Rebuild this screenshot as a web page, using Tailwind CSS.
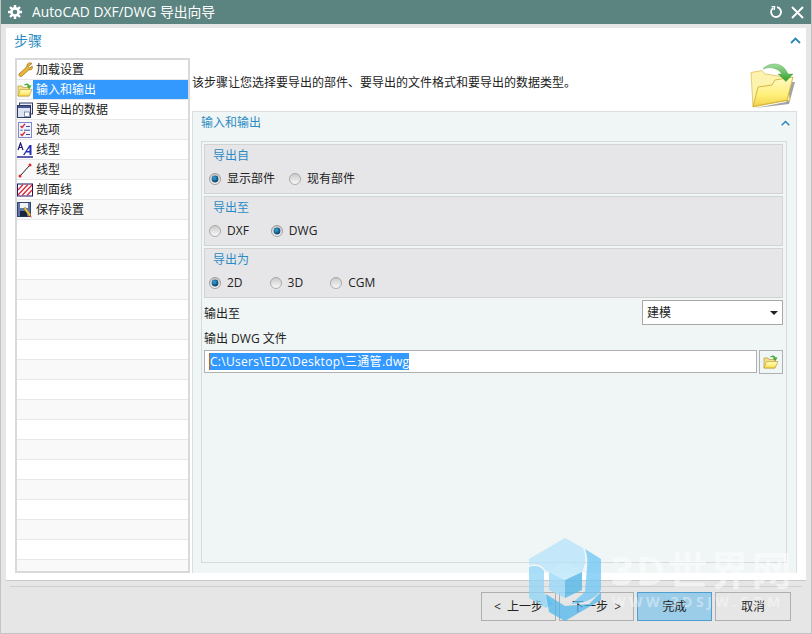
<!DOCTYPE html>
<html lang="zh-CN">
<head>
  <meta charset="UTF-8">
  <title>AutoCAD DXF/DWG 导出向导</title>
  <script src="https://cdn.jsdelivr.net/npm/@tailwindcss/browser@4"></script>
</head>
<body class="w-[812px] h-[634px] overflow-hidden">
  <svg class="absolute w-0 h-0">
    <defs>
      <linearGradient id="fold" x1="0" y1="0" x2="0" y2="1"><stop offset="0" stop-color="#fff8c8"/><stop offset="0.6" stop-color="#fff07a"/><stop offset="1" stop-color="#f2d24e"/></linearGradient>
      <linearGradient id="arrow" x1="0" y1="0" x2="0" y2="1"><stop offset="0" stop-color="#a4dba0"/><stop offset="1" stop-color="#2f9f28"/></linearGradient>
      <radialGradient id="dot" cx="0.4" cy="0.35" r="0.7"><stop offset="0" stop-color="#39a4d8"/><stop offset="1" stop-color="#04395f"/></radialGradient>
      <linearGradient id="ring" x1="0" y1="0" x2="0" y2="1"><stop offset="0" stop-color="#c9c9c9"/><stop offset="1" stop-color="#fafafa"/></linearGradient>
    </defs>
  </svg>

  <div class="relative w-[812px] h-[634px] overflow-hidden bg-[#e6e6e6] border-l border-r border-b border-[#c4c4c4] text-[12px] leading-[16px] text-[#222] [font-family:'Open_Sans','Noto_Sans_CJK_SC',sans-serif]">
    <!-- title bar -->
    <header class="h-[24px] -mx-px bg-[#5b8480] flex items-center pl-[8px] pr-[8px] text-white">
      <svg class="w-[14px] h-[14px]" viewBox="0 0 14 14"><circle cx="7" cy="7" r="3.6" fill="none" stroke="#fff" stroke-width="2.6"/><g stroke="#fff" stroke-width="2.4"><path d="M7 0v3M7 11v3M0 7h3M11 7h3M2 2l2.2 2.2M9.800 9.800L12 12M12 2L9.800 4.200M4.200 9.800L2 12"/></g></svg>
      <span class="ml-[10px] text-[13.800px]">AutoCAD DXF/DWG 导出向导</span>
      <svg class="ml-auto w-[14px] h-[14px]" viewBox="0 0 14 14" fill="none" stroke="#fff" stroke-width="1.800"><path d="M4.200 2.900A5 5 0 1 0 8 2.100"/><path d="M2.600 1.600L5.600 1.600 5.200 4.800" stroke-width="1.400"/></svg>
      <svg class="ml-[8px] w-[13px] h-[13px]" viewBox="0 0 13 13" fill="none" stroke="#fff" stroke-width="2"><path d="M1 1l11 11M12 1L1 12"/></svg>
    </header>

    <!-- white panel -->
    <div class="mt-[4px] ml-[5px] w-[800px] h-[553px] bg-white border-b border-[#c8c8c8] flex flex-col">
      <div class="h-[30px] pl-[8px] pr-[5px] pb-[5px] flex items-center justify-between text-[14px] text-[#2b8cc4]">
        <span>步骤</span>
        <svg class="w-[11px] h-[7px]" viewBox="0 0 11 7" fill="none" stroke="#2b86bd" stroke-width="1.800"><path d="M1 6l4.500-4.500L10 6"/></svg>
      </div>
      <div class="flex pl-[9px] gap-[2px]">
        <!-- step list -->
        <ul class="w-[175px] h-[515px] overflow-hidden border-2 border-[#d9d9d9] text-[#222]">
          <li class="h-[20px] flex items-center border-b border-[#e8e8e8] bg-white">
            <svg class="w-[16px] h-[16px] shrink-0" viewBox="0 0 16 16"><path d="M15 1.500c-2-1.200-5-.6-5 2 0 .9-.3 1.500-1 2.200L2 12a2 2 0 0 0 2.500 2.500l6.500-6c.8-.6 1.400-.8 2.200-.8 1.800 0 2.800-1.700 2-3.500L12.500 6 11 4.500z" fill="#eab53a" stroke="#a2730f" stroke-width="0.800"/></svg>
            <span class="ml-[3px]">加载设置</span>
          </li>
          <li class="h-[20px] flex items-center border-b border-[#e8e8e8] bg-[#f9f9f9]">
            <svg class="w-[16px] h-[16px] shrink-0" viewBox="0 0 16 16"><path d="M1 14V4h4l1 1.500h6V14z" fill="#f5e08a" stroke="#b89a3a" stroke-width="0.700"/><path d="M1 14l2.500-6.500H15L12 14z" fill="url(#fold)" stroke="#c4a437" stroke-width="0.700"/><path d="M7 3.500C8 1.200 11 .8 12.500 3.400L14.500 3.200 12.600 7 9.800 4.200l1.200-.2C10 2.800 8.500 2.700 7 3.500z" fill="#43ad38"/></svg>
            <span class="pl-[3px] flex-1 h-[19px] bg-[#3399ff] text-white flex items-center">输入和输出</span>
          </li>
          <li class="h-[20px] flex items-center border-b border-[#e8e8e8] bg-white">
            <svg class="w-[16px] h-[16px] shrink-0" viewBox="0 0 16 16"><rect x="2.500" y="1" width="13" height="11" fill="#e9ecf5" stroke="#2f3a63"/><rect x="0.500" y="3.500" width="13" height="12" fill="#dfe4f3" stroke="#2f3a63"/><rect x="1" y="4" width="12" height="2" fill="#46568f"/><rect x="7.500" y="10" width="5" height="4.500" fill="#fff" stroke="#5b6797" stroke-width="0.700"/></svg>
            <span class="ml-[3px]">要导出的数据</span>
          </li>
          <li class="h-[20px] flex items-center border-b border-[#e8e8e8] bg-[#f9f9f9]">
            <svg class="w-[16px] h-[16px] shrink-0" viewBox="0 0 16 16"><rect x="1.500" y="0.500" width="13" height="15" fill="#f2f3fb" stroke="#7f86c9"/><path d="M3.500 4l1.500 1.500L8 1.800M3.500 12l1.500 1.500L8 9.800" fill="none" stroke="#d5232a" stroke-width="1.300"/><path d="M9 4.500h4M3.500 8.200h2M7 8.200h6M9 12.500h4" stroke="#3a4a9c"/></svg>
            <span class="ml-[3px]">选项</span>
          </li>
          <li class="h-[20px] flex items-center border-b border-[#e8e8e8] bg-white">
            <svg class="w-[16px] h-[16px] shrink-0" viewBox="0 0 16 16"><path d="M1 8L3.500 1 6 8M2 5.500h3" fill="none" stroke="#1c1c70" stroke-width="1.200"/><path d="M6 13L12.500 3h2v10h-2v-2.500H9L7.700 13zM10 9h2.500V5.500z" fill="#2430b8"/><path d="M0 15h16" stroke="#1c1c90" stroke-width="1.400"/></svg>
            <span class="ml-[3px]">线型</span>
          </li>
          <li class="h-[20px] flex items-center border-b border-[#e8e8e8] bg-[#f9f9f9]">
            <svg class="w-[16px] h-[16px] shrink-0" viewBox="0 0 16 16"><path d="M3 14L13 3" stroke="#222" stroke-width="1"/><circle cx="3" cy="14" r="1.500" fill="#d8232a"/><circle cx="13" cy="3" r="1.500" fill="#d8232a"/></svg>
            <span class="ml-[3px]">线型</span>
          </li>
          <li class="h-[20px] flex items-center border-b border-[#e8e8e8] bg-white">
            <svg class="w-[16px] h-[16px] shrink-0" viewBox="0 0 16 16"><rect x="0.500" y="2" width="15" height="12" fill="#fff" stroke="#1e1466"/><path d="M1 8L6 2.500M1 13L11 2.500M5 13.500L15 3M10 13.500L15 8" stroke="#dc2a3a" stroke-width="1.300"/></svg>
            <span class="ml-[3px]">剖面线</span>
          </li>
          <li class="h-[20px] flex items-center border-b border-[#e8e8e8] bg-[#f9f9f9]">
            <svg class="w-[16px] h-[16px] shrink-0" viewBox="0 0 16 16"><rect x="0.500" y="0.500" width="13" height="14" fill="#5f76a8" stroke="#33446f"/><rect x="3" y="1" width="8" height="5" fill="#f0f2f8"/><rect x="3" y="9" width="7" height="5.500" fill="#1b2540"/><path d="M8 5l6 8-1.500 1.500L7 7z" fill="#f0cd3c" stroke="#9a7a1a" stroke-width="0.500"/><path d="M13 13l2 2.500-2.500-.8z" fill="#d8232a"/></svg>
            <span class="ml-[3px]">保存设置</span>
          </li>
          <li class="h-[20px] border-b border-[#e8e8e8] bg-white"></li>
          <li class="h-[20px] border-b border-[#e8e8e8] bg-[#f9f9f9]"></li>
          <li class="h-[20px] border-b border-[#e8e8e8] bg-white"></li>
          <li class="h-[20px] border-b border-[#e8e8e8] bg-[#f9f9f9]"></li>
          <li class="h-[20px] border-b border-[#e8e8e8] bg-white"></li>
          <li class="h-[20px] border-b border-[#e8e8e8] bg-[#f9f9f9]"></li>
          <li class="h-[20px] border-b border-[#e8e8e8] bg-white"></li>
          <li class="h-[20px] border-b border-[#e8e8e8] bg-[#f9f9f9]"></li>
          <li class="h-[20px] border-b border-[#e8e8e8] bg-white"></li>
          <li class="h-[20px] border-b border-[#e8e8e8] bg-[#f9f9f9]"></li>
          <li class="h-[20px] border-b border-[#e8e8e8] bg-white"></li>
          <li class="h-[20px] border-b border-[#e8e8e8] bg-[#f9f9f9]"></li>
          <li class="h-[20px] border-b border-[#e8e8e8] bg-white"></li>
          <li class="h-[20px] border-b border-[#e8e8e8] bg-[#f9f9f9]"></li>
          <li class="h-[20px] border-b border-[#e8e8e8] bg-white"></li>
          <li class="h-[20px] border-b border-[#e8e8e8] bg-[#f9f9f9]"></li>
          <li class="h-[20px] border-b border-[#e8e8e8] bg-white"></li>
          <li class="h-[20px] bg-[#f9f9f9]"></li>
        </ul>

        <!-- right column -->
        <div class="w-[605px] flex flex-col">
          <div class="h-[53px] flex items-center justify-between pr-px">
            <p class="mt-[-4px]">该步骤让您选择要导出的部件、要导出的文件格式和要导出的数据类型。</p>
            <svg class="w-[46px] h-[46px]" viewBox="0 0 46 46">
              <path d="M5 46L39 42 45 20 42 20 36 40z" fill="#a3a3a3"/>
              <path d="M1 10.500L12 8.500 15 12 35 15 40 38 3 45z" fill="#fdf2ae" stroke="#dcc25c" stroke-width="0.800"/>
              <path d="M3 44.500L8 25 22 23 25 18 43 15 37 38z" fill="url(#fold)" stroke="#cda928" stroke-width="0.800"/>
              <path d="M13 7C18 1 32-2 38 12L43 12 36 19.500 28 12 32 12C28 6 20 4 13 7z" fill="url(#arrow)" stroke="#3a9a33" stroke-width="0.400"/>
            </svg>
          </div>
          <section class="h-[462px] bg-[#f0f5f5] border-t border-l border-r border-[#dcdfdf] flex flex-col">
            <div class="h-[29px] pl-[8px] pr-[6px] pb-[7px] flex items-center justify-between text-[#2b8cc4]">
              <span>输入和输出</span>
              <svg class="w-[9px] h-[6px]" viewBox="0 0 9 6" fill="none" stroke="#2b86bd" stroke-width="1.500"><path d="M.7 5.300L4.500 1.500 8.300 5.300"/></svg>
            </div>
            <div class="ml-[8px] mr-[9px] h-[422px] border border-[#d6dada] pl-[2px] pr-[3px] pt-[2px] flex flex-col">
              <fieldset class="h-[50px] mb-[2px] bg-[#e6e6e8] border border-[#d2d4d4] pl-[8px]">
                <p class="pt-[3px] h-[22px] text-[#2b8cc4]">导出自</p>
                <div class="flex items-center h-[24px] -ml-[4px] gap-[14px]">
                  <label class="flex items-center gap-[6px]"><svg class="w-[12px] h-[12px]" viewBox="0 0 12 12"><circle cx="6" cy="6" r="5.500" fill="url(#ring)" stroke="#8a8a8a" stroke-width="0.800"/><circle cx="6" cy="6" r="3.400" fill="url(#dot)"/></svg>显示部件</label>
                  <label class="flex items-center gap-[6px]"><svg class="w-[12px] h-[12px]" viewBox="0 0 12 12"><circle cx="6" cy="6" r="5.500" fill="url(#ring)" stroke="#9a9a9a" stroke-width="0.800"/></svg>现有部件</label>
                </div>
              </fieldset>
              <fieldset class="h-[50px] mb-[2px] bg-[#e6e6e8] border border-[#d2d4d4] pl-[8px]">
                <p class="pt-[3px] h-[22px] text-[#2b8cc4]">导出至</p>
                <div class="flex items-center h-[24px] -ml-[4px] gap-[22px]">
                  <label class="flex items-center gap-[6px]"><svg class="w-[12px] h-[12px]" viewBox="0 0 12 12"><circle cx="6" cy="6" r="5.500" fill="url(#ring)" stroke="#9a9a9a" stroke-width="0.800"/></svg>DXF</label>
                  <label class="flex items-center gap-[6px]"><svg class="w-[12px] h-[12px]" viewBox="0 0 12 12"><circle cx="6" cy="6" r="5.500" fill="url(#ring)" stroke="#8a8a8a" stroke-width="0.800"/><circle cx="6" cy="6" r="3.400" fill="url(#dot)"/></svg>DWG</label>
                </div>
              </fieldset>
              <fieldset class="h-[50px] bg-[#e6e6e8] border border-[#d2d4d4] pl-[8px]">
                <p class="pt-[3px] h-[22px] text-[#2b8cc4]">导出为</p>
                <div class="flex items-center h-[24px] -ml-[4px] gap-[27px]">
                  <label class="flex items-center gap-[6px]"><svg class="w-[12px] h-[12px]" viewBox="0 0 12 12"><circle cx="6" cy="6" r="5.500" fill="url(#ring)" stroke="#8a8a8a" stroke-width="0.800"/><circle cx="6" cy="6" r="3.400" fill="url(#dot)"/></svg>2D</label>
                  <label class="flex items-center gap-[6px]"><svg class="w-[12px] h-[12px]" viewBox="0 0 12 12"><circle cx="6" cy="6" r="5.500" fill="url(#ring)" stroke="#9a9a9a" stroke-width="0.800"/></svg>3D</label>
                  <label class="flex items-center gap-[6px]"><svg class="w-[12px] h-[12px]" viewBox="0 0 12 12"><circle cx="6" cy="6" r="5.500" fill="url(#ring)" stroke="#9a9a9a" stroke-width="0.800"/></svg>CGM</label>
                </div>
              </fieldset>
              <div class="mt-[2px] h-[25px] flex items-center justify-between">
                <span class="pt-[2px]">输出至</span>
                <div class="w-[141px] h-[25px] bg-white border border-[#a8a8a8] flex items-center justify-between pl-[4px] pr-[4px]">
                  <span class="pt-[1px]">建模</span>
                  <span class="w-0 h-0 border-l-[4px] border-r-[4px] border-t-[4px] border-l-transparent border-r-transparent border-t-[#222]"></span>
                </div>
              </div>
              <p class="mt-[4px] h-[20px] flex items-center">输出 DWG 文件</p>
              <div class="mt-[1px] flex gap-[2px]">
                <div class="w-[553px] h-[23px] bg-white border border-[#b0b0b0] pl-[4px] flex items-center">
                  <span class="h-[17px] border-l border-[#c8651a] bg-[#3399ff] text-white leading-[17px] tracking-[0.300px]">C:\Users\EDZ\Desktop\三通管.dwg</span>
                </div>
                <div class="w-[24px] h-[24px] border border-[#b0b0b0] flex items-center justify-center">
                  <svg class="w-[16px] h-[16px]" viewBox="0 0 16 16"><path d="M1 14V4h4l1 1.500h6V14z" fill="#f5e08a" stroke="#b89a3a" stroke-width="0.700"/><path d="M1 14l2.500-6.500H15L12 14z" fill="url(#fold)" stroke="#c4a437" stroke-width="0.700"/><path d="M7 3.500C8 1.200 11 .8 12.500 3.400L14.500 3.200 12.600 7 9.800 4.200l1.200-.2C10 2.800 8.500 2.700 7 3.500z" fill="#43ad38"/></svg>
                </div>
              </div>
            </div>
          </section>
        </div>
      </div>
    </div>

    <!-- footer -->
    <div class="mt-[5px] ml-[9px] w-[792px] border-t border-[#cfcfcf]"></div>
    <footer class="mt-[5px] pl-[480px] flex gap-[3px] text-[12px]">
      <button class="w-[75px] h-[29px] border border-[#aeaeae] bg-[#e6e6e6]">&lt;&nbsp; 上一步</button>
      <button class="w-[75px] h-[29px] border border-[#aeaeae] bg-[#e6e6e6]">下一步 &nbsp;&gt;</button>
      <button class="w-[75px] h-[29px] border border-[#4e9fd0] bg-[#9ccde8]">完成</button>
      <button class="w-[76px] h-[29px] border border-[#aeaeae] bg-[#e6e6e6]">取消</button>
    </footer>

    <!-- watermark -->
    <div class="absolute left-[528px] top-[538px] w-[72px] h-[83px] pointer-events-none">
      <svg class="w-full h-full" viewBox="0 0 72 83">
        <path d="M0 21L36 0 54 10C58 18 56 28 53 34L36 24 20 34 16 32C14 28 8 25 0 27z" fill="#b5e2fa" opacity="0.75"/>
        <path d="M0 29C6 27 12 28 15 33L15 55 24 66 17 70 0 60z" fill="#8fd4f6" opacity="0.75"/>
        <path d="M56 11L72 21 72 52C66 62 52 66 42 66L56 54 58 30C59 22 58 16 56 11z" fill="#6cc6f4" opacity="0.75"/>
        <path d="M17 56L36 68 60 66 72 54 72 62 36 83 20 74z" fill="#4fb6ec" opacity="0.75"/>
        <path d="M36 24L53 34 36 42 20 34z" fill="#bfe7fb" opacity="0.85"/>
        <path d="M36 42L53 34 53 52 36 60z" fill="#5ab8e8" opacity="0.85"/>
        <path d="M20 34L36 42 36 60 20 52z" fill="#9adaf8" opacity="0.8"/>
      </svg>
    </div>
    <div class="absolute left-[610px] top-[546px] text-white/50 font-bold text-[40px] leading-[48px] tracking-[2px] pointer-events-none">3D世界网</div>
    <div class="absolute left-[611px] top-[594px] text-white/40 font-bold text-[14px] leading-[16px] tracking-[3.500px] pointer-events-none">WWW.3DSJW.COM</div>
  </div>
</body>
</html>
